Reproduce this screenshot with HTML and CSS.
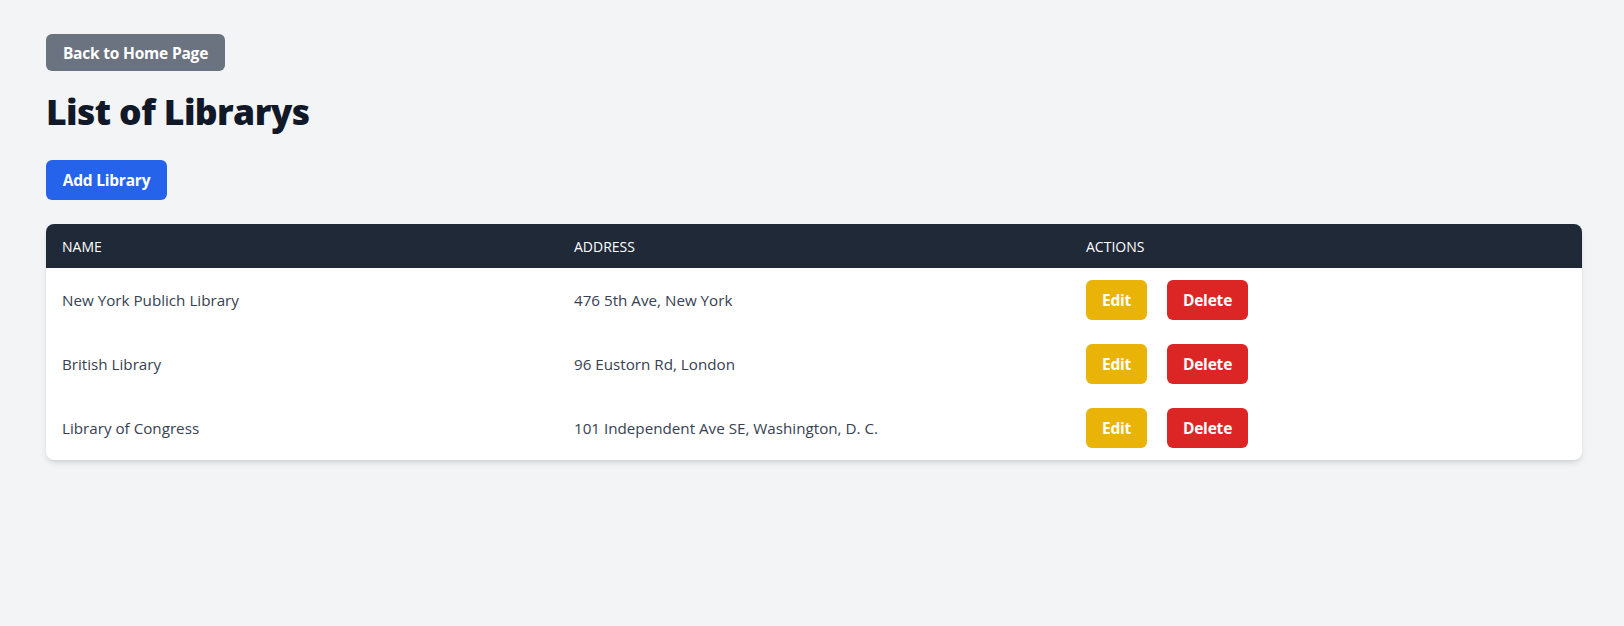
FILE: index.html
```html
<!DOCTYPE html>
<html>
<head>
<meta charset="utf-8">
<link rel="stylesheet" href="styles.css">
</head>
<body>
<div class="page">
  <a class="btn btn-back" href="#">Back to Home Page</a>
  <h1 class="title">List of Librarys</h1>
  <a class="btn btn-add" href="#">Add Library</a>
  <div class="card">
    <table class="table">
      <thead>
        <tr><th>Name</th><th>Address</th><th>Actions</th></tr>
      </thead>
      <tbody>
        <tr>
          <td>New York Publich Library</td>
          <td>476 5th Ave, New York</td>
          <td><div class="actions"><a class="btn btn-edit" href="#">Edit</a><a class="btn btn-delete" href="#">Delete</a></div></td>
        </tr>
        <tr>
          <td>British Library</td>
          <td>96 Eustorn Rd, London</td>
          <td><div class="actions"><a class="btn btn-edit" href="#">Edit</a><a class="btn btn-delete" href="#">Delete</a></div></td>
        </tr>
        <tr>
          <td>Library of Congress</td>
          <td>101 Independent Ave SE, Washington, D. C.</td>
          <td><div class="actions"><a class="btn btn-edit" href="#">Edit</a><a class="btn btn-delete" href="#">Delete</a></div></td>
        </tr>
      </tbody>
    </table>
  </div>
</div>
</body>
</html>
```

FILE: styles.css
```css
* { box-sizing: border-box; }
html, body { margin: 0; padding: 0; }
body {
  background: #f3f4f6;
  font-family: "Open Sans", "Noto Sans", sans-serif;
  color: #374151;
  min-height: 626px;
}
.page {
  padding: 34px 42px 0 46px;
  display: flex;
  flex-direction: column;
  align-items: flex-start;
}
.btn {
  display: inline-flex;
  align-items: center;
  justify-content: center;
  color: #fff;
  font-weight: 700;
  font-size: 15.5px;
  text-decoration: none;
  border-radius: 6px;
  letter-spacing: -0.2px;
}
.btn-back {
  background: #6b7280;
  width: 179px;
  height: 37px;
}
.title {
  margin: 18px 0 0 0;
  font-size: 35.5px;
  line-height: 44px;
  font-weight: 800;
  color: #111827;
  letter-spacing: -0.6px;
}
.btn-add {
  background: #2563eb;
  width: 121px;
  height: 40px;
  margin-top: 27px;
}
.card {
  margin-top: 24px;
  width: 1536px;
  background: #fff;
  border-radius: 8px;
  overflow: hidden;
  box-shadow: 0 4px 6px -1px rgba(0,0,0,0.1), 0 2px 4px -2px rgba(0,0,0,0.1);
}
.table {
  width: 100%;
  border-collapse: collapse;
  table-layout: fixed;
}
.table th {
  background: #1f2937;
  color: #fff;
  text-transform: uppercase;
  font-weight: 400;
  font-size: 14px;
  text-align: left;
  height: 44px;
  padding: 0 16px;
}
.table td {
  height: 64px;
  padding: 0 16px;
  font-size: 15.2px;
  color: #374151;
}
.actions {
  display: flex;
  gap: 20px;
}
.btn-edit {
  background: #eab308;
  width: 61px;
  height: 40px;
}
.btn-delete {
  background: #dc2626;
  width: 81px;
  height: 40px;
}
```
